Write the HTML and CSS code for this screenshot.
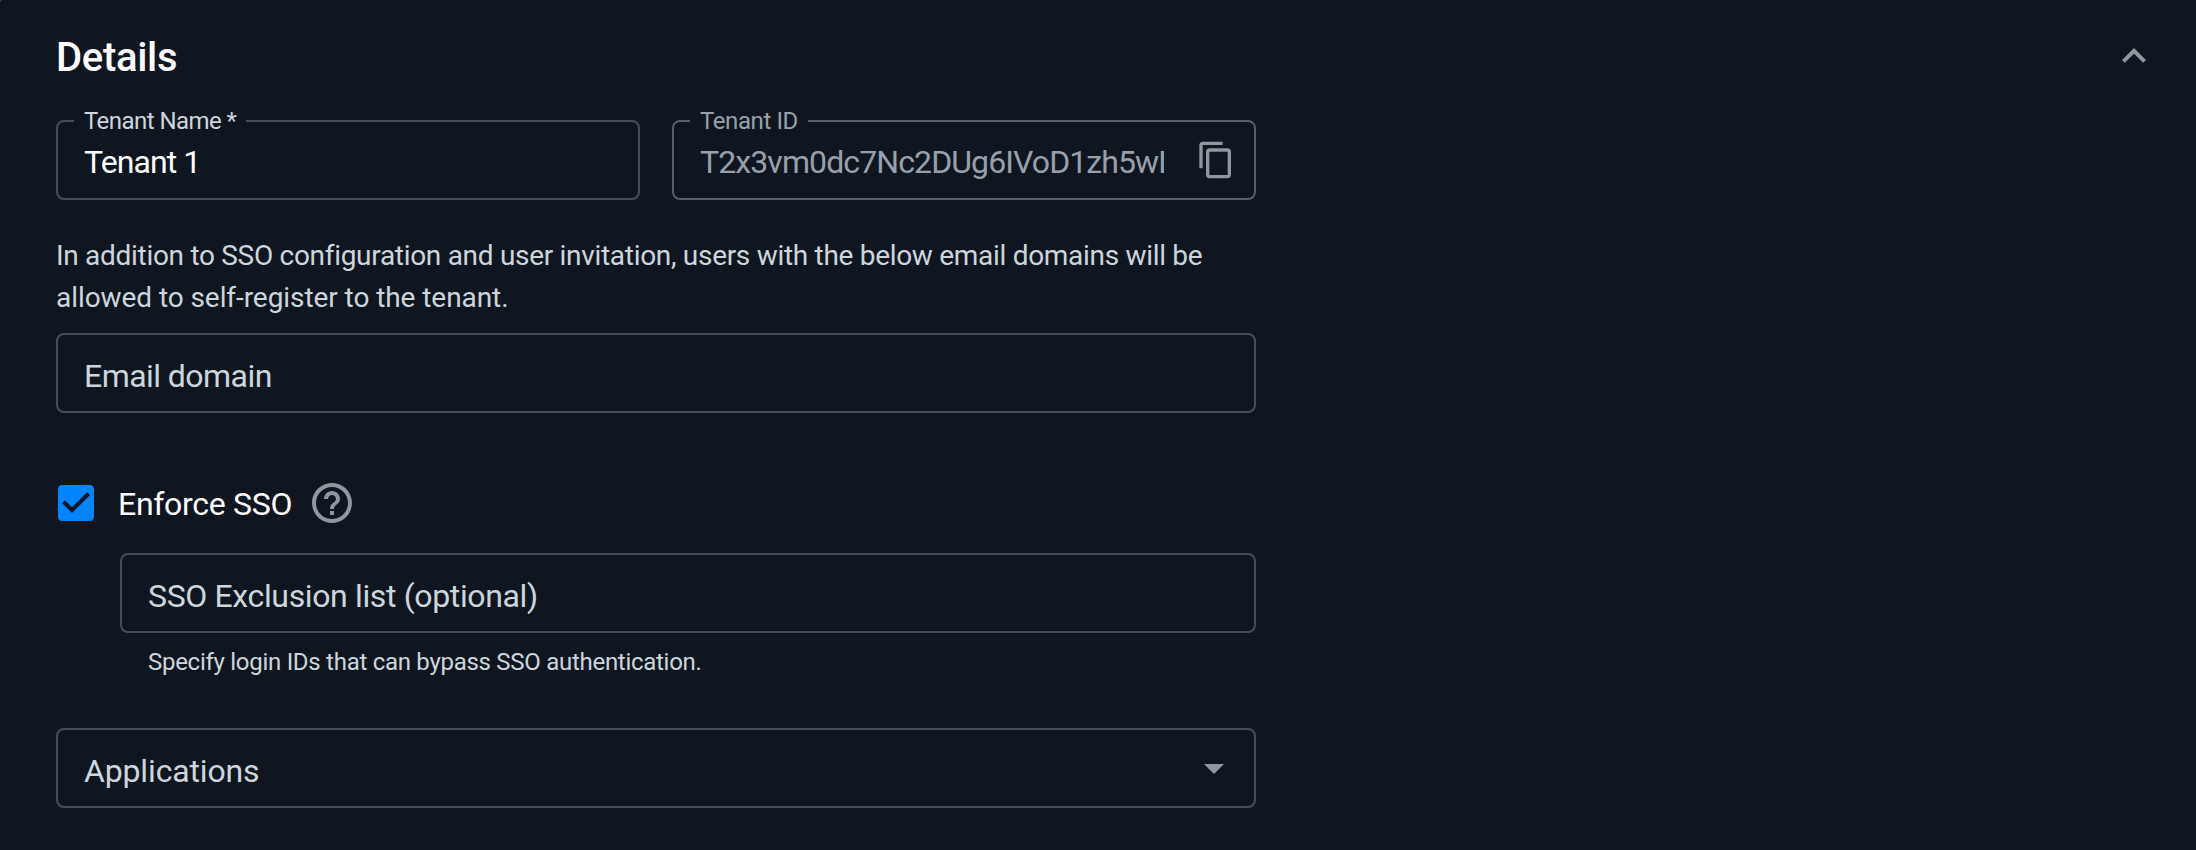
FILE: index.html
```
<!DOCTYPE html>
<html lang="en">
<head>
    <meta charset="UTF-8">
    <meta name="viewport" content="width=device-width, initial-scale=1.0">
    <title>Tenant Details</title>
    <link rel="stylesheet" href="styles.css">
</head>
<body>
    <section class="panel">
        <!-- Header -->
        <div class="panel-header">
            <h2 class="panel-title">Details</h2>
            <svg class="icon" viewBox="0 0 24 24"><path d="m12 8-6 6 1.41 1.41L12 10.83l4.59 4.58L18 14z"/></svg>
        </div>

        <div class="form">
            <div class="row">
                <div class="field">
                    <label class="field-label label-name">Tenant Name *</label>
                    <div class="field-value">Tenant 1</div>
                </div>
                <div class="field disabled">
                    <label class="field-label label-id">Tenant ID</label>
                    <div class="field-value value-id">T2x3vm0dc7Nc2DUg6IVoD1zh5wD</div>
                    <svg class="icon copy-icon" viewBox="0 0 24 24"><path d="M16 1H4c-1.1 0-2 .9-2 2v14h2V3h12zm3 4H8c-1.1 0-2 .9-2 2v14c0 1.1.9 2 2 2h11c1.1 0 2-.9 2-2V7c0-1.1-.9-2-2-2m0 16H8V7h11z"/></svg>
                </div>
            </div>

            <p class="description">
                <span class="line-one">In addition to SSO configuration and user invitation, users with the below email domains will be</span><br>
                <span class="line-two">allowed to self-register to the tenant.</span>
            </p>

            <div class="field">
                <div class="placeholder email">Email domain</div>
            </div>

            <!-- SSO -->
            <div class="checkbox-row">
                <svg class="icon checkbox" viewBox="0 0 24 24"><path d="M19 3H5c-1.11 0-2 .9-2 2v14c0 1.1.89 2 2 2h14c1.11 0 2-.9 2-2V5c0-1.1-.89-2-2-2m-9 14-5-5 1.41-1.41L10 14.17l7.59-7.59L19 8z"/></svg>
                <span class="checkbox-label">Enforce SSO</span>
                <svg class="icon" viewBox="0 0 24 24"><path d="M11 18h2v-2h-2zm1-16C6.48 2 2 6.48 2 12s4.48 10 10 10 10-4.48 10-10S17.52 2 12 2m0 18c-4.41 0-8-3.59-8-8s3.59-8 8-8 8 3.59 8 8-3.59 8-8 8m0-14c-2.21 0-4 1.79-4 4h2c0-1.1.9-2 2-2s2 .9 2 2c0 2-3 1.75-3 5h2c0-2.25 3-2.5 3-5 0-2.21-1.79-4-4-4"/></svg>
            </div>
            <div class="exclusion">
                <div class="field">
                    <div class="placeholder exclusion-label">SSO Exclusion list (optional)</div>
                </div>
                <p class="helper">Specify login IDs that can bypass SSO authentication.</p>
            </div>

            <div class="field applications">
                <div class="placeholder applications-label">Applications</div>
                <svg class="icon" viewBox="0 0 24 24"><path d="m7 10 5 5 5-5z"/></svg>
            </div>
        </div>
    </section>
</body>
</html>
```
FILE: styles.css
```
* {
    box-sizing: border-box;
}

body {
    margin: 0;
    background-color: #474e59;
    color: #ced6dd;
    font-family: Roboto, sans-serif;
    font-size: 32px;
}

.panel {
    height: 850px;
    padding: 26px 38px 0 56px;
    border-top-left-radius: 3px;
    background-color: #0f1620;
}

.panel-header {
    display: flex;
    justify-content: space-between;
    align-items: center;
    height: 60px;
}

.panel-title {
    margin: 0;
    padding-top: 4px;
    color: #ffffff;
    font-size: 40px;
    font-weight: 500;
    line-height: 60px;
    letter-spacing: -0.3px;
}

.icon {
    flex: none;
    width: 48px;
    height: 48px;
    fill: #8f979f;
}

.form {
    width: 1200px;
    margin-top: 34px;
}

.row {
    display: grid;
    grid-template-columns: 584px 584px;
    gap: 32px;
}

/* Outlined inputs */
.field {
    position: relative;
    display: flex;
    align-items: center;
    height: 80px;
    padding: 0 18px 0 26px;
    border: 2px solid #474e59;
    border-radius: 8px;
}

.field.disabled {
    border-color: #575f69;
}

/* Floating label sits over the top border */
.field-label {
    position: absolute;
    top: -16px;
    left: 16px;
    height: 30px;
    padding-left: 10px;
    background-color: #0f1620;
    font-size: 24px;
    line-height: 30px;
    white-space: nowrap;
}

.label-name {
    width: 172px;
    letter-spacing: -0.55px;
}

.label-id {
    width: 118px;
    letter-spacing: -0.4px;
}

.field-value {
    color: #ffffff;
    line-height: 44px;
    padding-top: 4px;
    letter-spacing: -0.9px;
    white-space: nowrap;
}

.value-id {
    width: 464px;
    overflow: hidden;
}

.disabled .field-label,
.disabled .field-value {
    color: #98a1ab;
}

.copy-icon {
    width: 40px;
    height: 40px;
    margin-left: auto;
}

.description {
    margin: 35px 0 14px;
    font-size: 28px;
    line-height: 42px;
    white-space: nowrap;
}

.line-one {
    letter-spacing: -0.3px;
}

.line-two {
    letter-spacing: -0.07px;
}

.placeholder {
    flex: 1;
    padding-top: 6px;
    line-height: 44px;
    white-space: nowrap;
}

.email {
    letter-spacing: -0.55px;
}

/* SSO section */
.checkbox-row {
    display: flex;
    align-items: center;
    height: 48px;
    margin: 66px 0 26px -4px;
}

.checkbox {
    fill: #0084ff;
}

.checkbox-label {
    width: 190px;
    margin-left: 18px;
    padding-top: 2px;
    color: #ffffff;
    letter-spacing: -0.3px;
    white-space: nowrap;
}

.exclusion {
    margin-left: 64px;
}

.exclusion-label {
    letter-spacing: -0.36px;
}

.helper {
    margin: 9px 28px 0;
    font-size: 24px;
    line-height: 40px;
    letter-spacing: -0.28px;
    white-space: nowrap;
}

.applications {
    margin-top: 46px;
    padding-right: 16px;
}

.applications-label {
    letter-spacing: -0.15px;
}
```
